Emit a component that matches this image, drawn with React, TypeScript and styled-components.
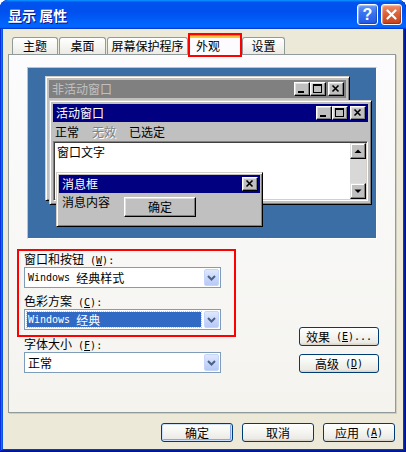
import React from 'react';
import styled, { createGlobalStyle } from 'styled-components';

const GlobalStyle = createGlobalStyle`
  html, body {
    margin: 0;
    padding: 0;
    background: #ffffff;
  }
  body {
    font-family: "Noto Sans CJK SC", "Noto Sans", sans-serif;
    font-size: 12px;
    line-height: 14px;
    color: #000000;
  }
  * {
    box-sizing: border-box;
  }
`;

const StyledWindow = styled.div`
  width: 406px;
  height: 452px;
  display: flex;
  flex-direction: column;
  padding: 0 3px 3px;
  background: #ece9d8;
  border-radius: 8px 8px 0 0;
  overflow: hidden;
  box-shadow: inset -1px -1px #00138c, inset 1px 1px #0831d9,
    inset -2px -2px #001ea0, inset 2px 2px #166aee, inset -3px -3px #003bda,
    inset 3px 3px #0855dd;
`;

const TitleBar = styled.div`
  flex: none;
  height: 29px;
  margin: 0 -3px;
  display: flex;
  align-items: center;
  padding: 0 4px 0 8px;
  border-radius: 8px 8px 0 0;
  background: linear-gradient(
    180deg,
    #0997ff,
    #0053ee 8%,
    #0050ee 40%,
    #0066ff 88%,
    #0066ff 93%,
    #005bff 95%,
    #003dd7 96%,
    #003dd7
  );
`;

const TitleText = styled.div`
  font-size: 14px;
  font-weight: 700;
  color: #ffffff;
  text-shadow: 1px 1px #0f1089;
  white-space: pre;
`;

const CaptionGroup = styled.div`
  margin-left: auto;
  display: flex;
  gap: 3px;
`;

const XPCaptionButton = styled.div<{ $kind: 'help' | 'close' }>`
  width: 21px;
  height: 21px;
  border: 1px solid #ffffff;
  border-radius: 3px;
  display: flex;
  align-items: center;
  justify-content: center;
  color: #ffffff;
  font-family: "Liberation Sans", Arial, sans-serif;
  font-weight: 700;
  font-size: 16px;
  background: ${({ $kind }) =>
    $kind === 'help'
      ? 'linear-gradient(180deg, #6a9cf9 0%, #3a74f1 40%, #2259e6 100%)'
      : 'linear-gradient(180deg, #f0926e 0%, #dd6238 45%, #c5421c 100%)'};
  box-shadow: inset 1px 1px 1px rgba(255, 255, 255, 0.45),
    inset -1px -1px 1px rgba(0, 0, 0, 0.25);
`;

const StyledBody = styled.div`
  flex: 1;
  display: flex;
  flex-direction: column;
  padding: 4px 7px 0 5px;
`;

const TabStrip = styled.div`
  flex: none;
  height: 21px;
  display: flex;
  align-items: flex-end;
  padding-left: 4px;
  position: relative;
  z-index: 1;
`;

const Tab = styled.div<{ $width: number; $gap?: number }>`
  width: ${({ $width }) => $width}px;
  height: 17px;
  margin-right: ${({ $gap = 0 }) => $gap}px;
  border: 1px solid #919b9c;
  border-bottom: none;
  border-radius: 3px 3px 0 0;
  background: linear-gradient(180deg, #ffffff 0%, #f4f4f0 60%, #ebeae3 100%);
  display: flex;
  align-items: center;
  justify-content: center;
  white-space: nowrap;
`;

const SelectedTab = styled.div`
  width: 54px;
  height: 24px;
  margin-bottom: -3px;
  border: 2px solid #ff0000;
  background: #fcfcfe;
  box-shadow: inset 0 1px #e68b2c, inset 0 3px #ffc73c;
  padding: 4px 0 0 6px;
  white-space: nowrap;
`;

const Panel = styled.div`
  flex: none;
  height: 359px;
  display: flex;
  flex-direction: column;
  padding-top: 12px;
  border: 1px solid #919b9c;
  background: linear-gradient(180deg, #fcfcfe 0%, #f4f3ee 100%);
  box-shadow: 1px 1px 0 #d0cebf;
`;

const Desktop = styled.div`
  position: relative;
  flex: none;
  width: 350px;
  height: 172px;
  margin-left: 18px;
  background: #3a6ea5;
  border: 1px solid;
  border-color: #c5c2b2 #ffffff #ffffff #c5c2b2;
`;

const PreviewWindow = styled.div<{
  $x: number;
  $y: number;
  $w: number;
  $h: number;
  $pad?: number;
}>`
  position: absolute;
  left: ${({ $x }) => $x}px;
  top: ${({ $y }) => $y}px;
  width: ${({ $w }) => $w}px;
  height: ${({ $h }) => $h}px;
  display: flex;
  flex-direction: column;
  padding: ${({ $pad = 3 }) => $pad}px;
  background: #c0c0c0;
  border: 1px solid;
  border-color: #d4d0c8 #000000 #000000 #d4d0c8;
  box-shadow: inset 1px 1px 0 #ffffff, inset -1px -1px 0 #808080;
`;

const Caption = styled.div<{ $active?: boolean }>`
  flex: none;
  height: 18px;
  display: flex;
  align-items: center;
  padding: 0 2px 0 3px;
  background: ${({ $active }) => ($active ? '#000080' : '#808080')};
  color: ${({ $active }) => ($active ? '#ffffff' : '#c0c0c0')};
  white-space: nowrap;
`;

const CaptionButtons = styled.div`
  margin-left: auto;
  display: flex;
`;

const ClassicButtonFace = styled.div<{ $gapBefore?: number }>`
  width: 16px;
  height: 14px;
  margin-left: ${({ $gapBefore = 0 }) => $gapBefore}px;
  background: #c0c0c0;
  border: 1px solid;
  border-color: #ffffff #000000 #000000 #ffffff;
  box-shadow: inset -1px -1px 0 #808080, inset 1px 1px 0 #dfdfdf;
  display: flex;
  align-items: center;
  justify-content: center;
`;

const MenuRow = styled.div`
  flex: none;
  height: 19px;
  display: flex;
  align-items: center;
  gap: 13px;
  padding-left: 2px;
`;

const MenuItem = styled.span<{ $disabled?: boolean }>`
  color: ${({ $disabled }) => ($disabled ? '#808080' : '#000000')};
  text-shadow: ${({ $disabled }) => ($disabled ? '1px 1px 0 #ffffff' : 'none')};
`;

const TextArea = styled.div`
  flex: 1;
  display: flex;
  background: #ffffff;
  border: 1px solid;
  border-color: #808080 #ffffff #ffffff #808080;
  box-shadow: inset 1px 1px 0 #404040, inset -1px -1px 0 #d4d0c8;
  padding: 1px;
`;

const WindowText = styled.div`
  padding: 2px 0 0 2px;
`;

const ScrollBar = styled.div`
  margin-left: auto;
  width: 16px;
  display: flex;
  flex-direction: column;
  justify-content: space-between;
  background: #d8d8d8;
`;

const ScrollArrow = styled.div`
  width: 16px;
  height: 16px;
  background: #c0c0c0;
  border: 1px solid;
  border-color: #dfdfdf #000000 #000000 #dfdfdf;
  box-shadow: inset -1px -1px 0 #808080, inset 1px 1px 0 #ffffff;
  display: flex;
  align-items: center;
  justify-content: center;
`;

const MessageBody = styled.div`
  flex: 1;
  display: flex;
  align-items: flex-start;
  padding: 2px 0 0 3px;
`;

const ClassicPushButton = styled.div`
  width: 72px;
  height: 20px;
  margin: 2px 0 0 14px;
  background: #c0c0c0;
  border: 1px solid;
  border-color: #ffffff #000000 #000000 #ffffff;
  box-shadow: inset -1px -1px 0 #808080, inset 1px 1px 0 #dfdfdf;
  display: flex;
  align-items: center;
  justify-content: center;
`;

const LowerRow = styled.div`
  display: flex;
  align-items: flex-end;
  margin-top: 10px;
  padding: 0 16px 0 8px;
`;

const LeftColumn = styled.div`
  width: 219px;
  display: flex;
  flex-direction: column;
`;

const Highlight = styled.div`
  border: 2px solid #ff0000;
  padding: 1px 13px 5px 5px;
  display: flex;
  flex-direction: column;
`;

const Indented = styled.div`
  padding-left: 7px;
  display: flex;
  flex-direction: column;
`;

const FieldLabel = styled.div<{ $mt?: number }>`
  height: 14px;
  margin: ${({ $mt = 0 }) => $mt}px 0 1px;
  white-space: nowrap;
`;

const Latin = styled.span`
  font-family: "DejaVu Sans Mono", "Liberation Mono", monospace;
  font-size: 10px;
  white-space: pre;
`;

const ComboBox = styled.div`
  width: 197px;
  height: 21px;
  display: flex;
  align-items: center;
  padding: 1px;
  background: #ffffff;
  border: 1px solid #7f9db9;
`;

const ComboText = styled.div<{ $selected?: boolean }>`
  flex: 1;
  height: 15px;
  margin: 0 3px 0 1px;
  padding-left: 1px;
  display: flex;
  align-items: center;
  white-space: nowrap;
  background: ${({ $selected }) => ($selected ? '#316ac5' : 'transparent')};
  color: ${({ $selected }) => ($selected ? '#ffffff' : '#000000')};
  outline: ${({ $selected }) => ($selected ? '1px dotted #f0c060' : 'none')};
`;

const DropButton = styled.div`
  width: 15px;
  height: 17px;
  border: 1px solid #c6d6fb;
  border-radius: 2px;
  background: linear-gradient(180deg, #dfe8fd 0%, #c9d8fb 50%, #b6caf6 100%);
  display: flex;
  align-items: center;
  justify-content: center;
`;

const RightColumn = styled.div`
  margin-left: auto;
  display: flex;
  flex-direction: column;
  gap: 8px;
`;

const XPButton = styled.div<{ $width: number; $primary?: boolean }>`
  width: ${({ $width }) => $width}px;
  height: 19px;
  display: flex;
  align-items: center;
  justify-content: center;
  white-space: nowrap;
  border: 1px solid #003c74;
  border-radius: 3px;
  background: linear-gradient(180deg, #ffffff 0%, #f6f6f2 40%, #ecebe6 85%, #d6d0c5 100%);
  box-shadow: ${({ $primary }) =>
    $primary
      ? 'inset 0 0 0 1px #cee0fb, inset -1px -1px 0 1px #89a8ec'
      : 'none'};
`;

const DialogButtons = styled.div`
  display: flex;
  justify-content: flex-end;
  gap: 9px;
  margin-top: 10px;
  padding-right: 1px;
`;

function MinGlyph() {
  return (
    <svg width="14" height="12" viewBox="0 0 14 12">
      <rect x="3" y="8" width="6" height="2" fill="#000" />
    </svg>
  );
}

function MaxGlyph() {
  return (
    <svg width="14" height="12" viewBox="0 0 14 12">
      <rect x="2.5" y="1.5" width="8" height="8" fill="none" stroke="#000" />
      <rect x="2" y="2" width="9" height="1" fill="#000" />
    </svg>
  );
}

function CloseGlyph() {
  return (
    <svg width="14" height="12" viewBox="0 0 14 12">
      <path d="M3.5 2.5l6 6M9.5 2.5l-6 6" stroke="#000" strokeWidth="1.6" />
    </svg>
  );
}

function ArrowGlyph({ up }: { up?: boolean }) {
  return (
    <svg width="14" height="14" viewBox="0 0 14 14">
      <polygon
        points={up ? '3.5,9 7,5.5 10.5,9' : '3.5,5.5 7,9 10.5,5.5'}
        fill="#000"
      />
    </svg>
  );
}

function Chevron() {
  return (
    <svg width="13" height="15" viewBox="0 0 13 15">
      <path
        d="M3 6l3.5 3.5L10 6"
        fill="none"
        stroke="#4d6185"
        strokeWidth="2"
      />
    </svg>
  );
}

function Combo({ children, selected }: { children: React.ReactNode; selected?: boolean }) {
  return (
    <ComboBox>
      <ComboText $selected={selected}>{children}</ComboText>
      <DropButton>
        <Chevron />
      </DropButton>
    </ComboBox>
  );
}

// access key in SimSun style: " (W)" with the letter underlined
function Key({ k }: { k: string }) {
  return (
    <Latin>
      {' ('}
      <u>{k}</u>)
    </Latin>
  );
}

export default function App() {
  return (
    <>
      <GlobalStyle />
      <StyledWindow>
        <TitleBar>
          <TitleText>显示 属性</TitleText>
          <CaptionGroup>
            <XPCaptionButton $kind="help">?</XPCaptionButton>
            <XPCaptionButton $kind="close">
              <svg width="11" height="11" viewBox="0 0 11 11">
                <path
                  d="M1.5 1.5l8 8M9.5 1.5l-8 8"
                  stroke="#fff"
                  strokeWidth="2.2"
                  strokeLinecap="round"
                />
              </svg>
            </XPCaptionButton>
          </CaptionGroup>
        </TitleBar>

        <StyledBody>
          <TabStrip>
            <Tab $width={46} $gap={1}>主题</Tab>
            <Tab $width={47} $gap={1}>桌面</Tab>
            <Tab $width={81}>屏幕保护程序</Tab>
            <SelectedTab>外观</SelectedTab>
            <Tab $width={43}>设置</Tab>
          </TabStrip>

          <Panel>
            <Desktop>
              <PreviewWindow $x={17} $y={8} $w={305} $h={125}>
                <Caption>
                  非活动窗口
                  <CaptionButtons>
                    <ClassicButtonFace>
                      <MinGlyph />
                    </ClassicButtonFace>
                    <ClassicButtonFace>
                      <MaxGlyph />
                    </ClassicButtonFace>
                    <ClassicButtonFace $gapBefore={2}>
                      <CloseGlyph />
                    </ClassicButtonFace>
                  </CaptionButtons>
                </Caption>
              </PreviewWindow>

              <PreviewWindow $x={21} $y={32} $w={323} $h={105}>
                <Caption $active>
                  活动窗口
                  <CaptionButtons>
                    <ClassicButtonFace>
                      <MinGlyph />
                    </ClassicButtonFace>
                    <ClassicButtonFace>
                      <MaxGlyph />
                    </ClassicButtonFace>
                    <ClassicButtonFace $gapBefore={2}>
                      <CloseGlyph />
                    </ClassicButtonFace>
                  </CaptionButtons>
                </Caption>
                <MenuRow>
                  <MenuItem>正常</MenuItem>
                  <MenuItem $disabled>无效</MenuItem>
                  <MenuItem>已选定</MenuItem>
                </MenuRow>
                <TextArea>
                  <WindowText>窗口文字</WindowText>
                  <ScrollBar>
                    <ScrollArrow>
                      <ArrowGlyph up />
                    </ScrollArrow>
                    <ScrollArrow>
                      <ArrowGlyph />
                    </ScrollArrow>
                  </ScrollBar>
                </TextArea>
              </PreviewWindow>

              <PreviewWindow $x={28} $y={104} $w={207} $h={55} $pad={2}>
                <Caption $active>
                  消息框
                  <CaptionButtons>
                    <ClassicButtonFace>
                      <CloseGlyph />
                    </ClassicButtonFace>
                  </CaptionButtons>
                </Caption>
                <MessageBody>
                  消息内容
                  <ClassicPushButton>确定</ClassicPushButton>
                </MessageBody>
              </PreviewWindow>
            </Desktop>

            <LowerRow>
              <LeftColumn>
                <Highlight>
                  <FieldLabel>
                    窗口和按钮
                    <Key k="W" />
                    <Latin>:</Latin>
                  </FieldLabel>
                  <Combo>
                    <Latin>{'Windows '}</Latin>经典样式
                  </Combo>
                  <FieldLabel $mt={6}>
                    色彩方案
                    <Key k="C" />
                    <Latin>:</Latin>
                  </FieldLabel>
                  <Combo selected>
                    <Latin>{'Windows '}</Latin>经典
                  </Combo>
                </Highlight>
                <Indented>
                  <FieldLabel>
                    字体大小
                    <Key k="F" />
                    <Latin>:</Latin>
                  </FieldLabel>
                  <Combo>正常</Combo>
                </Indented>
              </LeftColumn>

              <RightColumn>
                <XPButton $width={80}>
                  效果
                  <Key k="E" />
                  <Latin>...</Latin>
                </XPButton>
                <XPButton $width={80}>
                  高级
                  <Key k="D" />
                </XPButton>
              </RightColumn>
            </LowerRow>
          </Panel>

          <DialogButtons>
            <XPButton $width={72} $primary>确定</XPButton>
            <XPButton $width={72}>取消</XPButton>
            <XPButton $width={72}>
              应用
              <Key k="A" />
            </XPButton>
          </DialogButtons>
        </StyledBody>
      </StyledWindow>
    </>
  );
}
